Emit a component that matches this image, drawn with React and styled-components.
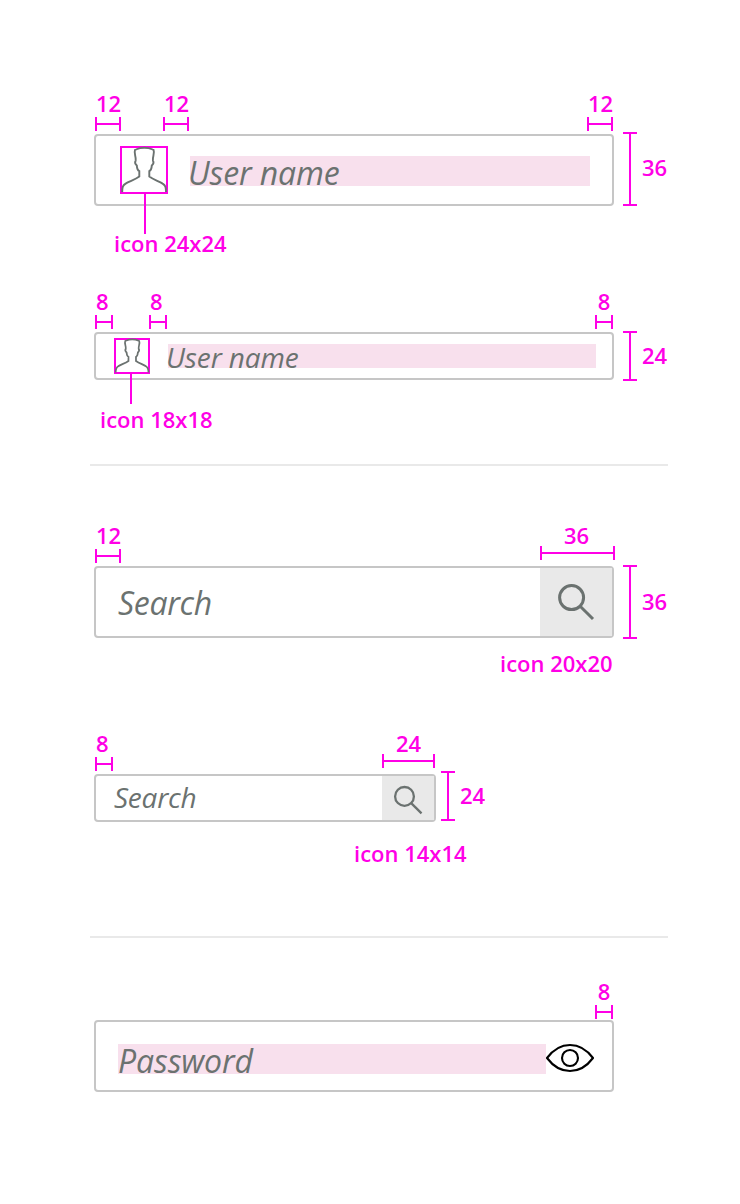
import React from 'react';
import styled, { createGlobalStyle } from 'styled-components';

const PINK = '#ff00e6';
const INK = '#6b7270';

const GlobalStyle = createGlobalStyle`
  *, *::before, *::after { box-sizing: border-box; }
  body { margin: 0; background: #fff; font-family: 'Open Sans', 'Noto Sans', sans-serif; }
  svg { display: block; flex: none; }
`;

const Page = styled.main`
  display: flex;
  flex-direction: column;
  width: 740px;
  height: 1204px;
  padding: 90px 72px 0 90px;
  overflow: hidden;
`;

const Spec = styled.section`
  display: flex;
  flex-direction: column;
  flex: none;
  height: ${p => p.$height}px;
  padding: ${p => p.$lead || 0}px 0 0 4px;
`;

const Divider = styled.hr`
  flex: none;
  width: 100%;
  height: 2px;
  margin: 0;
  border: 0;
  background: #e9e9e9;
`;

const Measures = styled.div`
  display: flex;
  flex: none;
  align-items: flex-start;
  width: ${p => p.$width || 520}px;
  height: ${p => p.$height || 44}px;
  padding: 0 1px;
`;

const MeasureBox = styled.div`
  flex: none;
  width: ${p => p.$width}px;
  margin-left: ${p => p.$gap || 0}px;
  margin-right: ${p => p.$outset || 0}px;
  ${p => p.$end && 'margin-left: auto;'}
`;

const Label = styled.div`
  color: ${PINK};
  font-size: 22px;
  font-weight: 600;
  line-height: 26px;
  white-space: nowrap;
`;

const MeasureLabel = styled(Label)`
  display: flex;
  justify-content: ${p => (p.$centered ? 'center' : 'flex-start')};
  padding-left: ${p => (p.$centered ? 0 : 1)}px;
  padding-right: ${p => p.$nudge || 0}px;
  margin-bottom: ${p => (p.$tight ? -2 : 1)}px;
`;

const HRuler = styled.div`
  display: flex;
  align-items: center;
  height: 14px;
  border: solid ${PINK};
  border-width: 0 2px;
  &::before { content: ''; flex: 1; height: 2px; background: ${PINK}; }
`;

const VRuler = styled.div`
  display: flex;
  justify-content: center;
  flex: none;
  width: 14px;
  height: ${p => p.$height}px;
  margin: ${p => p.$top}px 5px 0 ${p => p.$gap || 9}px;
  border: solid ${PINK};
  border-width: 2px 0;
  &::before { content: ''; width: 2px; background: ${PINK}; }
`;

const FieldRow = styled.div`
  display: flex;
  flex: none;
  align-items: flex-start;
  height: ${p => p.$height}px;
`;

const HeightLabel = styled(Label)`
  margin-top: ${p => p.$top}px;
`;

const Field = styled.div`
  display: flex;
  flex: none;
  align-items: ${p => p.$align || 'flex-start'};
  width: ${p => p.$width || 520}px;
  height: ${p => p.$height}px;
  padding-left: ${p => p.$pad}px;
  border: 2px solid #c6c6c6;
  border-radius: 4px;
`;

const TextArea = styled.div`
  display: flex;
  align-items: center;
  flex: none;
  width: ${p => p.$width}px;
  height: ${p => p.$height}px;
  margin: ${p => p.$top}px 0 0 ${p => p.$gap || 0}px;
  background: #f8e0ed;
`;

const Placeholder = styled.span`
  flex: none;
  margin-left: ${p => p.$shift || 0}px;
  margin-top: ${p => p.$drop || 0}px;
  color: ${INK};
  font-size: ${p => p.$size}px;
  font-style: italic;
  line-height: 44px;
  letter-spacing: ${p => p.$track || 0}px;
  white-space: nowrap;
`;

const SearchButton = styled.div`
  flex: none;
  width: ${p => p.$width}px;
  height: 100%;
  margin-left: auto;
  background: #e9e9e9;
`;

const IconFrame = styled.div`
  position: relative;
  flex: none;
  width: ${p => p.$size}px;
  height: ${p => p.$size}px;
  margin-top: ${p => p.$top}px;
  border: 2px solid ${PINK};
  & > svg { margin: -2px; }
  &::after {
    content: '';
    position: absolute;
    top: calc(100% + 2px);
    left: ${p => p.$size / 2 - 2 + (p.$leaderShift || 0)}px;
    width: 2px;
    height: ${p => p.$leader}px;
    background: ${PINK};
  }
`;

const Caption = styled(Label)`
  margin: ${p => p.$top}px 0 0 ${p => p.$left}px;
`;

const EyeSlot = styled.div`
  margin-top: 20px;
`;

function Measure({ value, width, gap, end, centered, tight, outset, nudge }) {
  return (
    <MeasureBox $width={width} $gap={gap} $end={end} $outset={outset}>
      <MeasureLabel $centered={centered} $tight={tight} $nudge={nudge}>{value}</MeasureLabel>
      <HRuler />
    </MeasureBox>
  );
}

function UserIcon({ size }) {
  return (
    <svg width={size} height={size} viewBox="0 0 48 48" fill="none" stroke={INK} strokeWidth={size > 40 ? 1.9 : 2.3}>
      <path d="M2.2 46C2.2 41 2.8 39.4 5.6 37.6C9 35.3 15 33.8 19.3 30.6V25.2C17.3 24.2 16.9 21.5 16.8 19.4C15 18 14.5 16.5 15.7 14.4C16.3 11 13.6 7.5 15 4C17.6 3 18 1.8 24.3 1.8C30.6 1.8 31 3 33.6 4C35 7.5 32.3 11 32.9 14.4C34.1 16.5 33.6 18 31.8 19.4C31.7 21.5 31.3 24.2 29.3 25.2V30.6C33.6 33.8 39.2 35.3 42.6 37.6C45.4 39.4 46 41 46 46" />
    </svg>
  );
}

function EyeIcon() {
  return (
    <svg width="48" height="32" viewBox="0 0 48 32" fill="none" stroke="#000" strokeWidth="2.1">
      <path d="M1 16C7 8 15 3 24 3S41 8 47 16C41 24 33 29 24 29S7 24 1 16Z" strokeLinejoin="round" />
      <circle cx="24" cy="16" r="8" />
    </svg>
  );
}

function UserNameLarge() {
  return (
    <Spec $height={198}>
      <Measures>
        <Measure value="12" width={26} />
        <Measure value="12" width={26} gap={42} />
        <Measure value="12" width={26} end />
      </Measures>
      <FieldRow $height={72}>
        <Field $height={72} $pad={24}>
          <IconFrame $size={48} $top={10} $leader={40}>
            <UserIcon size={48} />
          </IconFrame>
          <TextArea $width={400} $height={30} $top={20} $gap={22}>
            <Placeholder $size={32} $shift={-2} $drop={3} $track={-0.12}>User name</Placeholder>
          </TextArea>
        </Field>
        <VRuler $height={74} $top={-2} />
        <HeightLabel $top={20}>36</HeightLabel>
      </FieldRow>
      <Caption $top={24} $left={20}>icon 24x24</Caption>
    </Spec>
  );
}

function UserNameSmall() {
  return (
    <Spec $height={176}>
      <Measures>
        <Measure value="8" width={18} />
        <Measure value="8" width={18} gap={36} />
        <Measure value="8" width={18} end centered />
      </Measures>
      <FieldRow $height={48}>
        <Field $height={48} $pad={18}>
          <IconFrame $size={36} $top={4} $leader={30} $leaderShift={-2}>
            <UserIcon size={36} />
          </IconFrame>
          <TextArea $width={428} $height={24} $top={10} $gap={18}>
            <Placeholder $size={28} $shift={-2} $drop={2} $track={-0.12}>User name</Placeholder>
          </TextArea>
        </Field>
        <VRuler $height={50} $top={-1} />
        <HeightLabel $top={10}>24</HeightLabel>
      </FieldRow>
      <Caption $top={26} $left={6}>icon 18x18</Caption>
    </Spec>
  );
}

function SearchLarge() {
  return (
    <Spec $height={264} $lead={56}>
      <Measures>
        <Measure value="12" width={26} />
        <Measure value="36" width={75} end centered tight outset={-2} nudge={2} />
      </Measures>
      <FieldRow $height={72}>
        <Field $height={72} $pad={22} $align="center">
          <Placeholder $size={32} $drop={1} $track={-0.3}>Search</Placeholder>
          <SearchButton $width={72}>
            <svg width="72" height="68" viewBox="0 0 72 68" fill="none" stroke={INK} strokeWidth="3">
              <circle cx="31.6" cy="29.6" r="12" />
              <path d="M40.2 38.2L53 51" />
            </svg>
          </SearchButton>
        </Field>
        <VRuler $height={74} $top={-1} />
        <HeightLabel $top={22}>36</HeightLabel>
      </FieldRow>
      <Caption $top={12} $left={406}>icon 20x20</Caption>
    </Spec>
  );
}

function SearchSmall() {
  return (
    <Spec $height={206}>
      <Measures $width={342}>
        <Measure value="8" width={18} />
        <Measure value="24" width={53} end centered tight />
      </Measures>
      <FieldRow $height={48}>
        <Field $height={48} $width={342} $pad={18} $align="center">
          <Placeholder $size={28} $drop={-2} $track={-0.25}>Search</Placeholder>
          <SearchButton $width={52}>
            <svg width="52" height="44" viewBox="0 0 52 44" fill="none" stroke={INK} strokeWidth="2.3">
              <circle cx="22.5" cy="20.4" r="9.4" />
              <path d="M29.2 27.1L39.5 37.4" />
            </svg>
          </SearchButton>
        </Field>
        <VRuler $height={50} $top={-3} $gap={5} />
        <HeightLabel $top={8}>24</HeightLabel>
      </FieldRow>
      <Caption $top={18} $left={260}>icon 14x14</Caption>
    </Spec>
  );
}

function PasswordField() {
  return (
    <Spec $height={180} $lead={40}>
      <Measures $height={42}>
        <Measure value="8" width={18} end centered />
      </Measures>
      <FieldRow $height={72}>
        <Field $height={72} $pad={22}>
          <TextArea $width={428} $height={30} $top={22}>
            <Placeholder $size={32} $drop={3} $track={-0.12}>Password</Placeholder>
          </TextArea>
          <EyeSlot><EyeIcon /></EyeSlot>
        </Field>
      </FieldRow>
    </Spec>
  );
}

export default function App() {
  return (
    <>
      <GlobalStyle />
      <Page>
        <UserNameLarge />
        <UserNameSmall />
        <Divider />
        <SearchLarge />
        <SearchSmall />
        <Divider />
        <PasswordField />
      </Page>
    </>
  );
}
